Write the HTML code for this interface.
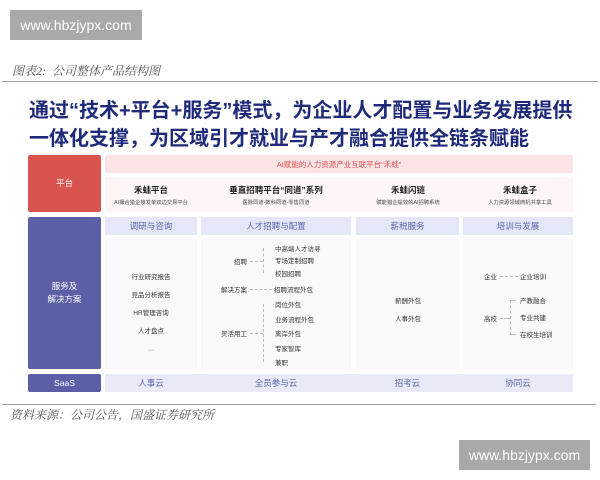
<!DOCTYPE html>
<html><head><meta charset="utf-8"><style>
*{margin:0;padding:0;box-sizing:border-box}
body{width:600px;height:480px;background:#fff;position:relative;overflow:hidden;font-family:"Liberation Sans","Noto Sans CJK SC",sans-serif}
.a{position:absolute;white-space:nowrap}
.wm{background:#a9a9a9;color:#fff;font-size:14px;display:flex;align-items:center;justify-content:center}
.cap{font-family:"Liberation Serif","Noto Serif CJK SC",serif;font-style:italic;color:#555;font-size:12px}
.t{color:#1f2a7a;font-weight:bold;font-size:20px;left:29px;line-height:24px}
.blk{color:#fff;font-size:8.5px;display:flex;align-items:center;justify-content:center;text-align:center;line-height:13px;border-radius:2px}
.hd{background:#e4e7f8;color:#5a63a8;font-size:8.5px;display:flex;align-items:center;justify-content:center}
.s{font-size:6.5px;color:#333;transform:translateY(-50%)}
.c{text-align:center;transform:translate(-50%,-50%)}
.dot{border-left:1px dashed #bbb}
.hl{border-top:1px dashed #bbb;height:0}
</style></head><body>
<div class="a wm" style="left:10px;top:10px;width:132px;height:30px">www.hbzjypx.com</div>
<div class="a cap" style="left:12px;top:62px">图表2:&nbsp; 公司整体产品结构图</div>
<div class="a" style="left:2px;top:81px;width:596px;height:1px;background:#9aa0a8"></div>
<div class="a t" style="top:99px">通过“技术+平台+服务”模式，为企业人才配置与业务发展提供</div>
<div class="a t" style="top:127px">一体化支撑，为区域引才就业与产才融合提供全链条赋能</div>

<div class="a blk" style="left:28px;top:155px;width:73px;height:57px;background:#d9534f">平台</div>
<div class="a" style="left:105px;top:155px;width:468px;height:18px;background:#fbe3e6;color:#d9534f;font-size:7.5px;display:flex;align-items:center;justify-content:center">AI赋能的人力资源产业互联平台“禾蛙”</div>
<div class="a" style="left:105px;top:177px;width:468px;height:35px;background:#fef6f6"></div>
<div class="a c" style="left:151px;top:190px;font-size:8.5px;font-weight:bold;color:#222">禾蛙平台</div>
<div class="a c" style="left:151px;top:202px;font-size:5.3px;color:#444">AI撮合猎企接发单双边交易平台</div>
<div class="a c" style="left:276px;top:190px;font-size:8.5px;font-weight:bold;color:#222">垂直招聘平台“同道”系列</div>
<div class="a c" style="left:276px;top:202px;font-size:5.3px;color:#444">医脉同道-数科同道-零售同道</div>
<div class="a c" style="left:408px;top:190px;font-size:8.5px;font-weight:bold;color:#222">禾蛙闪链</div>
<div class="a c" style="left:408px;top:202px;font-size:5.3px;color:#444">赋能猎企提效的AI招聘系统</div>
<div class="a c" style="left:520px;top:190px;font-size:8.5px;font-weight:bold;color:#222">禾蛙盒子</div>
<div class="a c" style="left:520px;top:202px;font-size:5.3px;color:#444">人力资源领域商机共享工具</div>

<div class="a blk" style="left:28px;top:217px;width:73px;height:152px;background:#5a5fa6">服务及<br>解决方案</div>
<div class="a hd" style="left:105px;top:217px;width:92px;height:18px">调研与咨询</div>
<div class="a hd" style="left:201px;top:217px;width:150px;height:18px">人才招聘与配置</div>
<div class="a hd" style="left:356px;top:217px;width:103px;height:18px">薪税服务</div>
<div class="a hd" style="left:463px;top:217px;width:110px;height:18px">培训与发展</div>
<div class="a" style="left:105px;top:239px;width:92px;height:130px;background:#f9f9fc"></div>
<div class="a" style="left:201px;top:239px;width:150px;height:130px;background:#f9f9fc"></div>
<div class="a" style="left:356px;top:239px;width:103px;height:130px;background:#f9f9fc"></div>
<div class="a" style="left:463px;top:239px;width:110px;height:130px;background:#f9f9fc"></div>

<div class="a s c" style="left:151px;top:276px">行业研究报告</div>
<div class="a s c" style="left:151px;top:294px">竞品分析报告</div>
<div class="a s c" style="left:151px;top:312px">HR管理咨询</div>
<div class="a s c" style="left:151px;top:330px">人才盘点</div>
<div class="a s c" style="left:151px;top:349px">…</div>

<div class="a dot" style="left:263px;top:248px;height:25px"></div>
<div class="a s" style="left:234px;top:261px">招聘</div>
<div class="a hl" style="left:250px;top:261px;width:13px"></div>
<div class="a s" style="left:275px;top:248px">中高端人才访寻</div>
<div class="a s" style="left:275px;top:260px">专场定制招聘</div>
<div class="a s" style="left:275px;top:273px">校园招聘</div>
<div class="a s" style="left:221px;top:289px">解决方案</div>
<div class="a hl" style="left:250px;top:289px;width:22px"></div>
<div class="a s" style="left:274px;top:289px">招聘流程外包</div>
<div class="a dot" style="left:263px;top:304px;height:58px"></div>
<div class="a s" style="left:221px;top:333px">灵活用工</div>
<div class="a hl" style="left:250px;top:333px;width:13px"></div>
<div class="a s" style="left:275px;top:304px">岗位外包</div>
<div class="a s" style="left:275px;top:319px">业务流程外包</div>
<div class="a s" style="left:275px;top:333px">离岸外包</div>
<div class="a s" style="left:275px;top:348px">专家智库</div>
<div class="a s" style="left:275px;top:362px">兼职</div>

<div class="a s c" style="left:408px;top:300px">薪酬外包</div>
<div class="a s c" style="left:408px;top:318px">人事外包</div>

<div class="a s" style="left:484px;top:276px">企业</div>
<div class="a hl" style="left:500px;top:276px;width:18px"></div>
<div class="a s" style="left:520px;top:276px">企业培训</div>
<div class="a s" style="left:484px;top:318px">高校</div>
<div class="a dot" style="left:510px;top:300px;height:35px"></div>
<div class="a hl" style="left:500px;top:318px;width:10px"></div>
<div class="a hl" style="left:510px;top:300px;width:6px"></div>
<div class="a hl" style="left:510px;top:334px;width:6px"></div>
<div class="a s" style="left:520px;top:300px">产教融合</div>
<div class="a s" style="left:520px;top:317px">专业共建</div>
<div class="a s" style="left:520px;top:334px">在校生培训</div>

<div class="a blk" style="left:28px;top:374px;width:73px;height:18px;background:#5a5fa6">SaaS</div>
<div class="a" style="left:105px;top:374px;width:468px;height:18px;background:#e8eaf8"></div>
<div class="a hd" style="left:105px;top:374px;width:92px;height:18px;background:none">人事云</div>
<div class="a hd" style="left:201px;top:374px;width:150px;height:18px;background:none">全员参与云</div>
<div class="a hd" style="left:356px;top:374px;width:103px;height:18px;background:none">招考云</div>
<div class="a hd" style="left:463px;top:374px;width:110px;height:18px;background:none">协同云</div>

<div class="a" style="left:2px;top:404px;width:594px;height:1px;background:#9aa0a8"></div>
<div class="a cap" style="left:10px;top:406px">资料来源：公司公告，国盛证券研究所</div>
<div class="a wm" style="left:459px;top:440px;width:131px;height:30px">www.hbzjypx.com</div>
</body></html>
